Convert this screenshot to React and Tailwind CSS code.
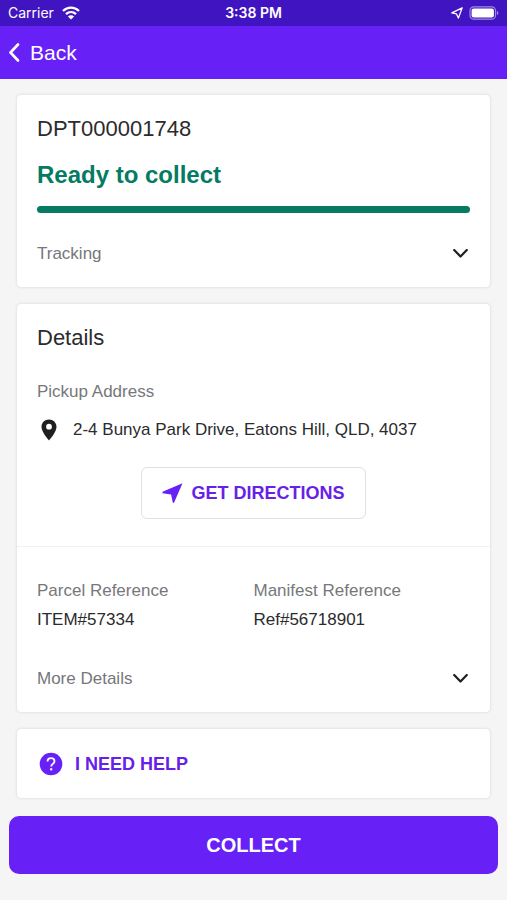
import { useState } from 'react'

const REFERENCES = [
  { id: 'parcel', label: 'Parcel Reference', value: 'ITEM#57334' },
  { id: 'manifest', label: 'Manifest Reference', value: 'Ref#56718901' },
]

function WifiIcon() {
  return (
    <svg width="18" height="14" viewBox="0 0 18 14" fill="none" stroke="currentColor" strokeWidth="2.3" aria-hidden="true">
      <path d="M1 5C5.6 .6 12.4 .6 17 5" />
      <path d="M4 8.1c2.9-2.7 7.1-2.7 10 0" />
      <path d="M9 13.6 5.9 10.4c1.8-1.6 4.4-1.6 6.2 0z" fill="currentColor" stroke="none" />
    </svg>
  )
}

function LocationIcon() {
  return (
    <svg width="12" height="12" viewBox="0 0 12 12" fill="none" stroke="currentColor" strokeWidth="1.3" strokeLinejoin="round" aria-hidden="true">
      <path d="M11.200 .8 .8 5.900l4.700 1 1.900 4.200z" />
    </svg>
  )
}

function BatteryIcon() {
  return (
    <svg width="30" height="14" viewBox="0 0 30 14" aria-hidden="true">
      <rect x="1" y=".8" width="25.500" height="12.400" rx="3.8" fill="none" stroke="#fff" strokeOpacity=".5" strokeWidth="1.2" />
      <rect x="2.600" y="2.400" width="22.300" height="9.200" rx="2" fill="#fff" />
      <path d="M27.9 5v4c1-.4 1.500-1.100 1.500-2s-.5-1.600-1.500-2z" fill="#fff" fillOpacity=".5" />
    </svg>
  )
}

function ChevronDown({ open }) {
  return (
    <svg
      className={open ? 'mr-0.5 rotate-180' : 'mr-0.5'}
      width="15" height="10" viewBox="0 0 15 10" fill="none" stroke="#1f1f1f" strokeWidth="2.200" strokeLinecap="round" strokeLinejoin="round" aria-hidden="true"
    >
      <path d="M1.200 1 7.500 7.500l6.300-6.500" />
    </svg>
  )
}

function PinIcon() {
  return (
    <svg className="mx-1 shrink-0" width="16" height="22" viewBox="0 0 16 22" fill="#1f1f1f" aria-hidden="true">
      <path fillRule="evenodd" d="M8 .5C3.700.5.500 3.700.500 7.800.500 13.200 8 21.500 8 21.500s7.500-8.300 7.500-13.700C15.500 3.700 12.300.5 8 .5zm0 4.300a2.900 2.900 0 1 1 0 5.800 2.900 2.900 0 0 1 0-5.800z" />
    </svg>
  )
}

function Card({ children }) {
  return (
    <section className="rounded-[5px] border border-[#e9e9e9] bg-white shadow-[0_0_2px_#e4e4e4]">{children}</section>
  )
}

function Expander({ label, open, onToggle }) {
  return (
    <button
      type="button"
      aria-expanded={open}
      onClick={onToggle}
      className="flex w-full items-center justify-between text-[17px] leading-6 text-[#76777b]"
    >
      {label}
      <ChevronDown open={open} />
    </button>
  )
}

export default function App() {
  const [trackingOpen, setTrackingOpen] = useState(false)
  const [detailsOpen, setDetailsOpen] = useState(false)

  return (
    <div className="min-h-screen bg-[#f5f5f5] font-['Liberation_Sans',Arial,sans-serif] text-[#2b2b2d]">
      {/* Status bar */}
      <div className="grid h-[26px] grid-cols-3 items-center bg-[#4014c0] px-2 font-['Inter',sans-serif] text-sm leading-5 text-white">
        <div className="flex items-center gap-2">
          <span>Carrier</span>
          <WifiIcon />
        </div>
        <span className="text-center font-semibold">3:38 PM</span>
        <div className="flex items-center justify-end gap-1.5">
          <LocationIcon />
          <BatteryIcon />
        </div>
      </div>

      {/* Header */}
      <header className="flex h-[53px] items-center bg-[#6720f6] px-2 text-white">
        <button type="button" className="flex items-center gap-2.5 text-[21px] leading-7">
          <svg width="12" height="20" viewBox="0 0 12 20" fill="none" stroke="currentColor" strokeWidth="2.600" strokeLinecap="round" strokeLinejoin="round" aria-hidden="true">
            <path d="M10 1.500 2.500 9.500l7.500 8" />
          </svg>
          Back
        </button>
      </header>

      <main className="flex flex-col gap-[15px] px-4 pt-[15px]">
        {/* Parcel status */}
        <Card>
          <div className="px-5 pt-5 pb-[21px]">
            <h1 className="text-[22px] leading-7">DPT000001748</h1>
            <p className="mt-4 text-2xl leading-8 font-bold text-[#047b62]">Ready to collect</p>
            <div className="mt-[15px] mb-[29px] h-[7px] rounded-full bg-[#047b62]" role="progressbar" aria-label="Ready to collect" aria-valuenow={100} />
            <Expander label="Tracking" open={trackingOpen} onToggle={() => setTrackingOpen(!trackingOpen)} />
          </div>
        </Card>

        {/* Details */}
        <Card>
          <div className="border-b border-[#f2f2f2] px-5 pt-5 pb-[27px]">
            <h2 className="text-[22px] leading-7">Details</h2>
            <h3 className="mt-7 text-[17px] leading-6 text-[#76777b]">Pickup Address</h3>
            <div className="mt-3.5 flex items-center gap-3">
              <PinIcon />
              <p className="text-[17px] leading-6">2-4 Bunya Park Drive, Eatons Hill, QLD, 4037</p>
            </div>
            <div className="mt-[25px] flex justify-center">
              <button type="button" className="flex h-[52px] items-center gap-2 rounded-md border border-[#e0e1e3] px-5 text-[18px] leading-6 font-bold text-[#6720e8]">
                <svg width="21" height="20" viewBox="0 0 21 20" fill="#6720f6" aria-hidden="true">
                  <path d="M20.500.2.500 8.800v1.500l8.600 1.200 1.700 8.200h1.200z" />
                </svg>
                GET DIRECTIONS
              </button>
            </div>
          </div>
          <div className="px-5 pt-8 pb-[21px]">
            <dl className="grid grid-cols-2 text-[17px]">
              {REFERENCES.map(ref => (
                <div key={ref.id}>
                  <dt className="leading-6 text-[#76777b]">{ref.label}</dt>
                  <dd className="mt-[5px] leading-6">{ref.value}</dd>
                </div>
              ))}
            </dl>
            <div className="mt-[35px]">
              <Expander label="More Details" open={detailsOpen} onToggle={() => setDetailsOpen(!detailsOpen)} />
            </div>
          </div>
        </Card>

        {/* Help */}
        <Card>
          <button type="button" className="flex h-[69px] w-full items-center gap-3 px-[22px] text-[18px] leading-6 font-bold text-[#6720e8]">
            <svg width="24" height="24" viewBox="0 0 24 24" aria-hidden="true">
              <circle cx="12" cy="12" r="11.300" fill="#6720f6" />
              <path d="M8.500 9.600c0-2 1.500-3.500 3.500-3.500s3.500 1.300 3.500 3.200c0 2.600-3.300 2.600-3.300 5.200" fill="none" stroke="#fff" strokeWidth="1.800" />
              <rect x="11.200" y="16.200" width="2" height="2.200" fill="#fff" />
            </svg>
            I NEED HELP
          </button>
        </Card>
      </main>

      {/* Primary action */}
      <footer className="px-[9px] pt-[17px] pb-6">
        <button type="button" className="h-[58px] w-full rounded-[10px] bg-[#6720f6] text-xl font-bold text-white">
          COLLECT
        </button>
      </footer>
    </div>
  )
}
